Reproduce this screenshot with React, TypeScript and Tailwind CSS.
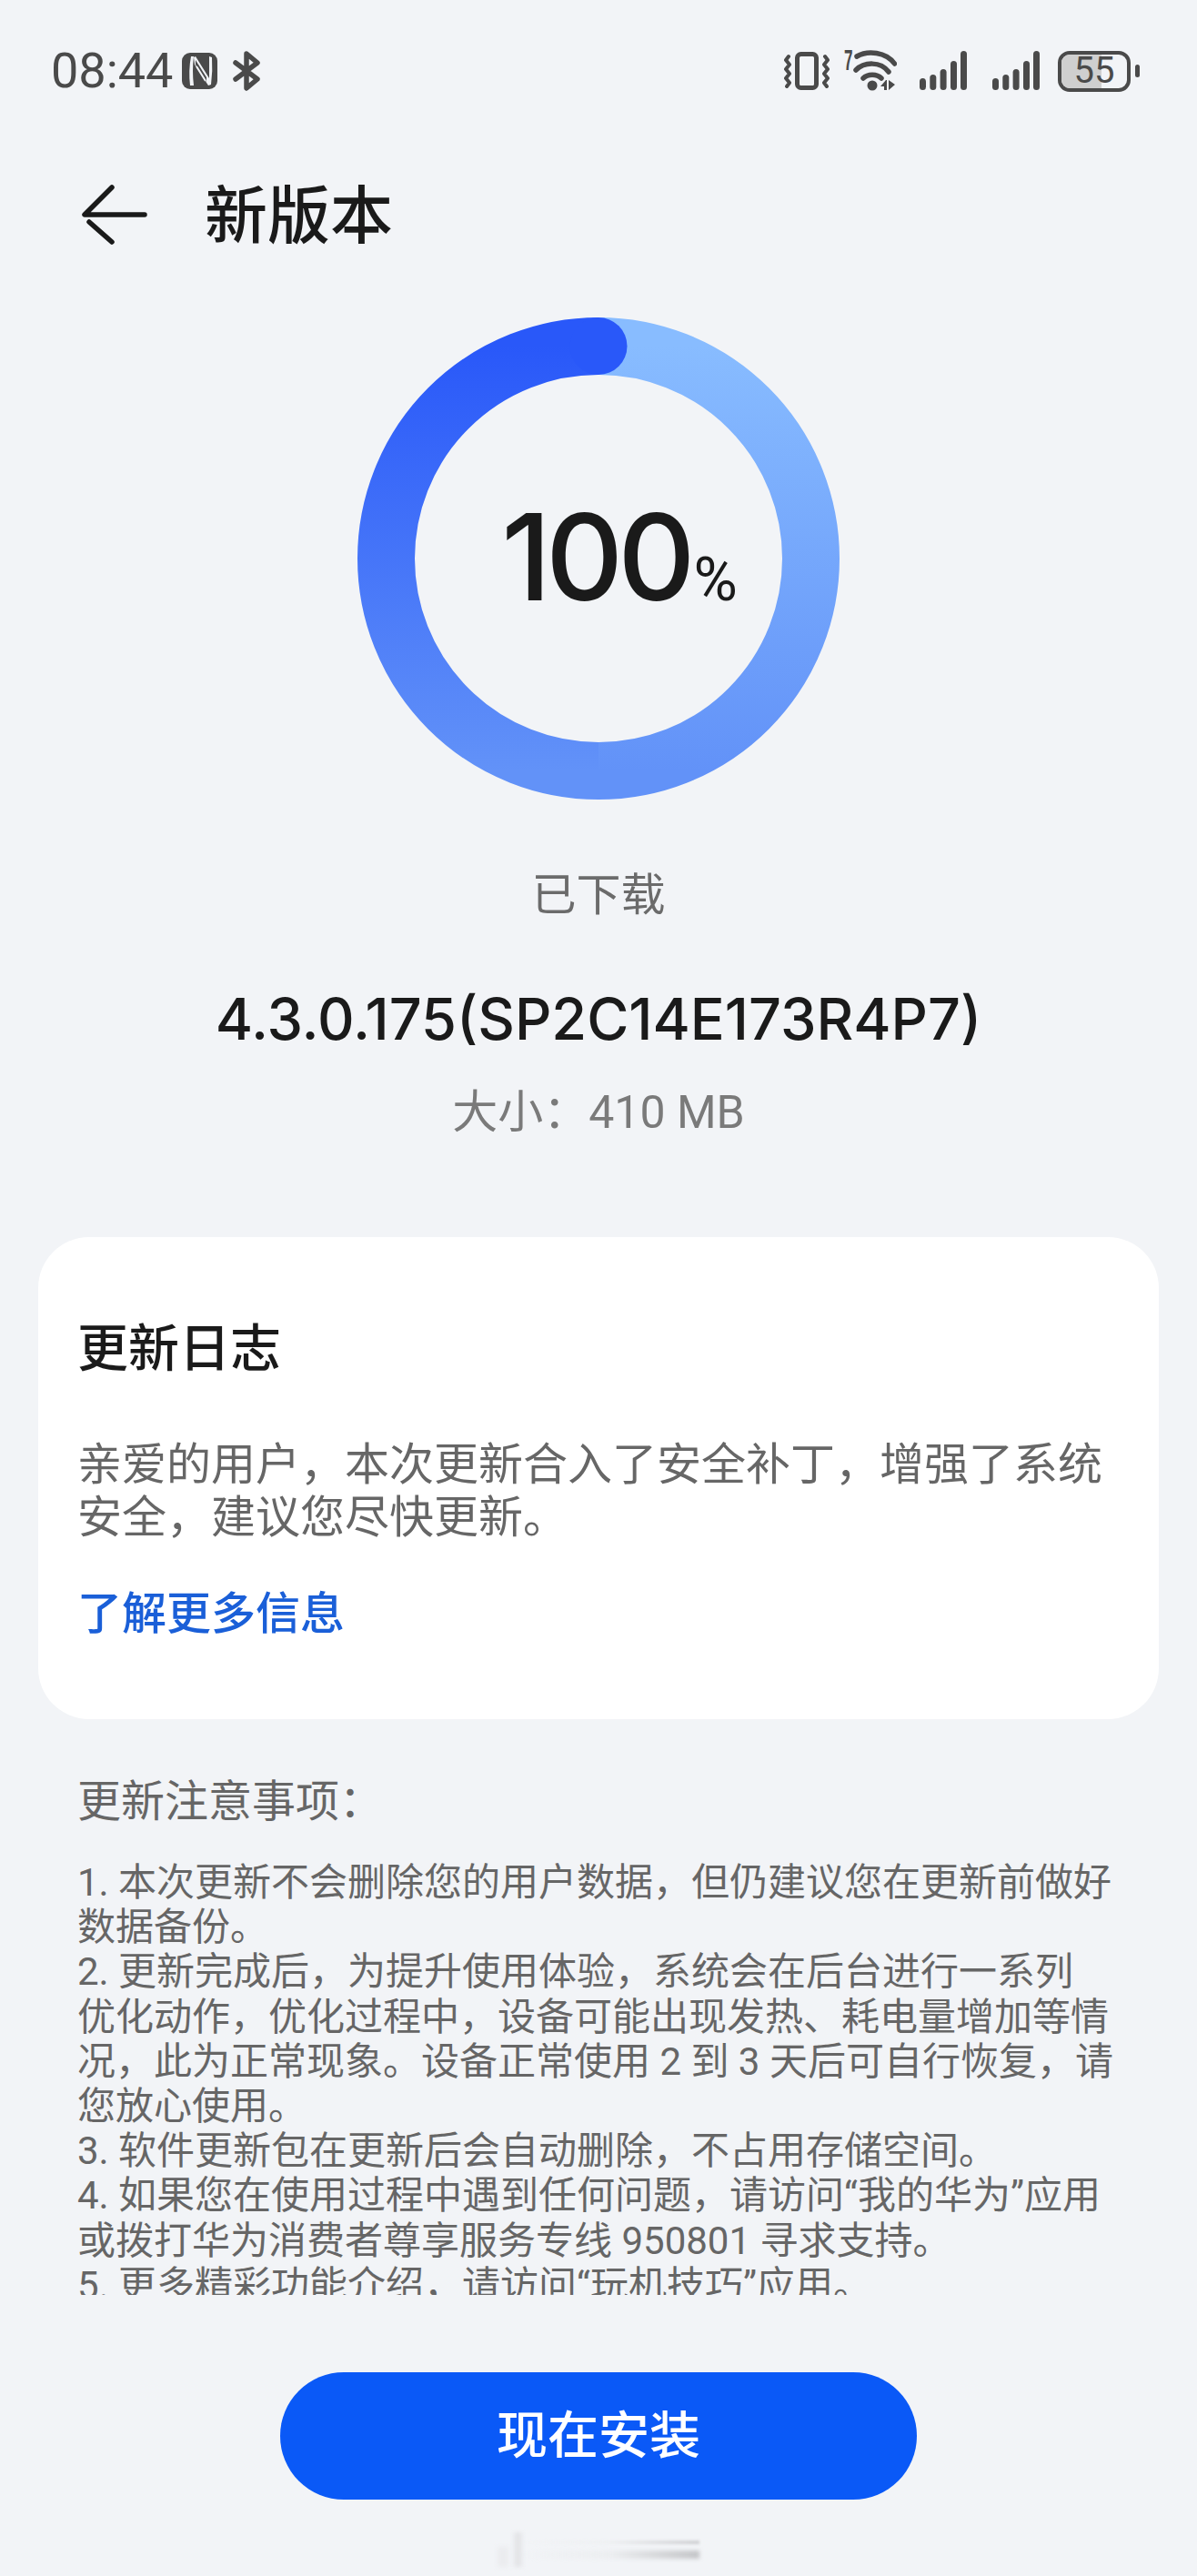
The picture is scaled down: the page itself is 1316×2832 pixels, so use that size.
const CJK = "font-['Roboto','Noto_Sans_CJK_SC',sans-serif]";

function Signal() {
  return (
    <svg width="52" height="44" viewBox="0 0 52 44" fill="#4a4a4a">
      <rect x="0" y="30" width="7" height="13" rx="3.5" />
      <rect x="11.300" y="26" width="7" height="17" rx="3.5" />
      <rect x="22.600" y="20" width="7" height="23" rx="3.5" />
      <rect x="34" y="11" width="7" height="32" rx="3.5" />
      <rect x="45" y="0" width="7" height="43" rx="3.5" />
    </svg>
  );
}

function StatusBar() {
  return (
    <div className="flex items-center justify-between h-[50px] mt-[53px] pl-[56px] pr-[63px]">
      <div className="flex items-center">
        <span className="text-[54px] leading-none text-[#4a4a4a] font-['Roboto',sans-serif]">08:44</span>
        <svg width="39" height="40" viewBox="0 0 39 40" className="ml-[10px]">
          <rect x="0" y="0" width="39" height="40" rx="9" fill="#4a4a4a" />
          <path d="M9 36Q7 20 10 4L13 4Q11 20 13 36z" fill="#f2f4f7" />
          <path d="M13 5L15 4L30 28V4L33 5Q34 20 32 35L29 36L14 13z" fill="#f2f4f7" />
          <path d="M15 13L27 32V27L15 8z" fill="#4a4a4a" />
          <path d="M16 15L26 31" stroke="#f2f4f7" strokeWidth="2" />
        </svg>
        <svg width="30" height="44" viewBox="0 0 30 44" fill="none" className="ml-[17px]" stroke="#4a4a4a" strokeWidth="5.500" strokeLinecap="round" strokeLinejoin="round">
          <path d="M3 13L27 31L15 41V3L27 13L3 31" />
        </svg>
      </div>
      <div className="flex items-center">
        <svg width="50" height="44" viewBox="0 0 50 44" fill="none">
          <rect x="14.500" y="3.500" width="21" height="37" rx="4" stroke="#4a4a4a" strokeWidth="5" />
          <path d="M5 6L2 10L6 15L2 20L6 25L2 30L6 35L3 39M45 6L48 10L44 15L48 20L44 25L48 30L44 35L47 39" stroke="#4a4a4a" strokeWidth="4" strokeLinecap="round" strokeLinejoin="round" />
        </svg>
        <svg width="58" height="50" viewBox="0 0 58 50" fill="none" className="ml-[16px]">
          <text x="0" y="24" fontSize="32" fontWeight="700" fill="#4a4a4a" fontFamily="Liberation Sans, sans-serif" textLength="9.500" lengthAdjust="spacingAndGlyphs">7</text>
          <path d="M14 9C26 2 46 4 55.500 17" stroke="#4a4a4a" strokeWidth="5.500" strokeLinecap="round" />
          <path d="M13 24C22 15 40 14 49 26" stroke="#4a4a4a" strokeWidth="5.500" strokeLinecap="round" />
          <path d="M21 33C26 28 36 28 41 33" stroke="#4a4a4a" strokeWidth="5.500" strokeLinecap="round" />
          <circle cx="31" cy="41" r="5.500" fill="#4a4a4a" />
          <path d="M46 35L40 42H44V46H47V35zM49 35V46L56 40z" fill="#4a4a4a" />
        </svg>
        <div className="ml-[25px]"><Signal /></div>
        <div className="ml-[28px]"><Signal /></div>
        <div className="ml-[20px] flex items-center">
          <div className="relative w-[80px] h-[45px] rounded-[13px] border-[4px] border-[#4a4a4a] overflow-hidden">
            <div className="h-full w-[44px] bg-[#cfcfcf]" />
            <span className="absolute inset-0 flex items-center justify-center text-[40px] leading-none text-[#4a4a4a] font-['Roboto',sans-serif]">55</span>
          </div>
          <div className="ml-[5px] w-[5px] h-[14px] rounded-full bg-[#4a4a4a]" />
        </div>
      </div>
    </div>
  );
}

function Ring() {
  const r = 233.5;
  const c = 265;
  return (
    <svg width="530" height="530" viewBox="0 0 530 530" className="block">
      <defs>
        <linearGradient id="light" x1="0" y1="0" x2="0" y2="1">
          <stop offset="0" stopColor="#88bcff" />
          <stop offset="1" stopColor="#6292f8" />
        </linearGradient>
        <linearGradient id="dark" x1="0" y1="0" x2="0" y2="1">
          <stop offset="0" stopColor="#2958f9" />
          <stop offset="1" stopColor="#6292f8" />
        </linearGradient>
      </defs>
      <path d={`M${c} ${c - r}A${r} ${r} 0 0 1 ${c} ${c + r}`} fill="none" stroke="url(#light)" strokeWidth="63" />
      <path d={`M${c} ${c + r}A${r} ${r} 0 0 1 ${c} ${c - r}`} fill="none" stroke="url(#dark)" strokeWidth="63" />
      <circle cx={c} cy={c - r} r="31.500" fill="#2958f9" />
    </svg>
  );
}

const noteLines = [
  "1. 本次更新不会删除您的用户数据，但仍建议您在更新前做好",
  "数据备份。",
  "2. 更新完成后，为提升使用体验，系统会在后台进行一系列",
  "优化动作，优化过程中，设备可能出现发热、耗电量增加等情",
  "况，此为正常现象。设备正常使用 2 到 3 天后可自行恢复，请",
  "您放心使用。",
  "3. 软件更新包在更新后会自动删除，不占用存储空间。",
  "4. 如果您在使用过程中遇到任何问题，请访问“我的华为”应用",
  "或拨打华为消费者尊享服务专线 950801 寻求支持。",
  "5. 更多精彩功能介绍，请访问“玩机技巧”应用。",
];

export default function App() {
  return (
    <div className={`w-[1316px] h-[2832px] overflow-hidden bg-[#f2f4f7] flex flex-col ${CJK}`}>
      <StatusBar />
      <div className="flex items-center h-[80px] mt-[95px] pl-[90px]">
        <svg width="72" height="68" viewBox="0 0 72 68" fill="none" stroke="#1a1a1a" strokeWidth="5.500" strokeLinecap="round" strokeLinejoin="round" className="-mt-[2px]">
          <path d="M33 3L3 33H69M8 41L33 63" />
        </svg>
        <h1 className="ml-[63px] text-[69px] leading-none font-medium text-[#1a1a1a]">新版本</h1>
      </div>
      <div className="flex flex-col items-center mt-[71px]">
        <div className="relative">
          <Ring />
          <div className="absolute inset-0 flex items-baseline justify-center pt-[197px] pl-[46px] text-[#1a1a1a]">
            <span className="text-[132px] leading-none font-medium font-['Inter',sans-serif] tracking-[-6px]">100</span>
            <span className="text-[66px] leading-none font-['Roboto',sans-serif] ml-[4px]">%</span>
          </div>
        </div>
        <p className="mt-[76px] text-[49px] leading-[60px] text-[#6b6b6b]">已下载</p>
        <p className="mt-[67px] text-[63px] leading-[76px] text-[#1a1a1a] font-medium font-['Inter','Noto_Sans_CJK_SC',sans-serif]">4.3.0.175(SP2C14E173R4P7)</p>
        <p className="mt-[35px] text-[50px] leading-[60px] text-[#7a7a7a]">大小：410 MB</p>
      </div>
      <section className="mt-[107px] mx-[42px] h-[530px] bg-white rounded-[56px] px-[43px] pt-[92px]">
        <h2 className="text-[56px] leading-[62px] font-medium text-[#1a1a1a]">更新日志</h2>
        <p className="mt-[68px] text-[49px] leading-[58px] text-[#666666]">亲爱的用户，本次更新合入了安全补丁，增强了系统安全，建议您尽快更新。</p>
        <p className="mt-[47px] text-[49px] leading-[60px] font-medium text-[#1a5fd8]">了解更多信息</p>
      </section>
      <section className="mt-[63px] mx-[85px] text-[#666666]">
        <h3 className="text-[48px] leading-[56px]">更新注意事项：</h3>
        <div className="mt-[36px] h-[478px] overflow-hidden text-[42px] leading-[49.2px] whitespace-nowrap">
          {noteLines.map((n) => (
            <p key={n}>{n}</p>
          ))}
        </div>
      </section>
      <div className="flex justify-center mt-[85px]">
        <button className="w-[700px] h-[140px] rounded-full bg-[#0a59f7] text-white text-[56px] font-medium">现在安装</button>
      </div>
      <div className="flex justify-center mt-[35px]">
        <div className="flex w-[222px] h-[39px] items-end">
          <div className="w-[12px] h-[22px] bg-[#ebecef] blur-[2px]" />
          <div className="ml-[6px] w-[9px] h-[38px] bg-[#e4e5e8] blur-[2px]" />
          <div className="flex-1 h-[39px] flex flex-col justify-center gap-[7px]">
            <div className="h-[4px] bg-linear-to-r from-transparent via-[#eef0f2] to-[#cfd0d3] blur-[1.5px]" />
            <div className="h-[9px] bg-linear-to-r from-transparent via-[#eceef0] to-[#c4c5c8] blur-[2px]" />
          </div>
        </div>
      </div>
    </div>
  );
}
